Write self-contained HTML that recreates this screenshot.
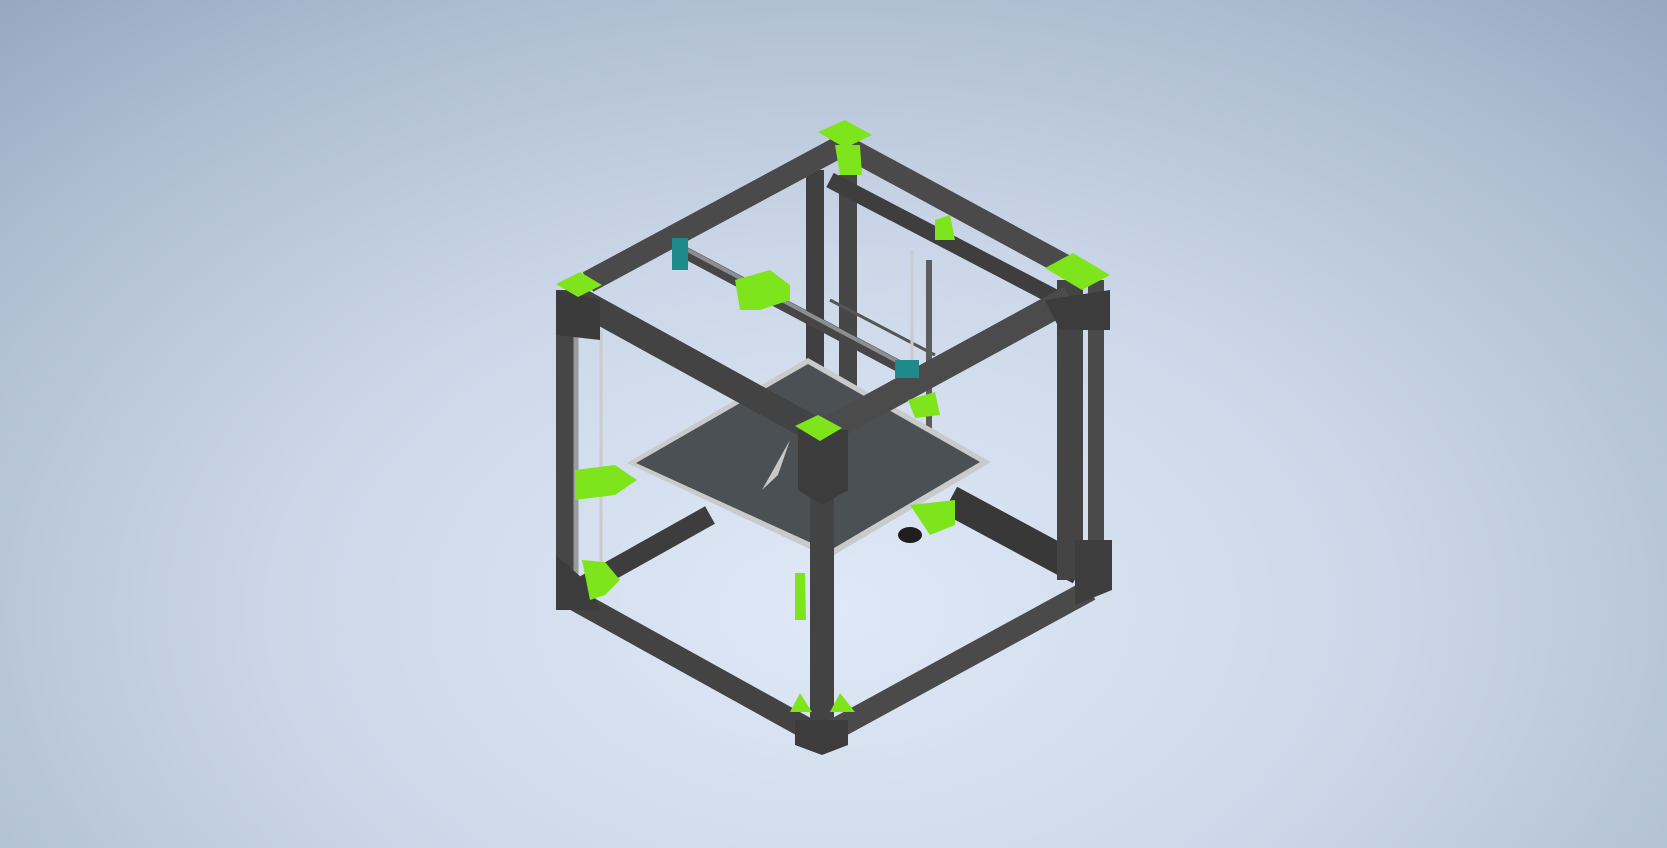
<!DOCTYPE html>
<html><head><meta charset="utf-8"><style>
html,body{margin:0;padding:0;width:1667px;height:848px;overflow:hidden}
body{background:radial-gradient(ellipse 75% 95% at 50% 72%,#dfe8f6 0%,#cbd7e8 45%,#aebcd1 80%,#98a8c0 100%)}
svg{position:absolute;left:0;top:0}
</style></head><body>
<svg width="1667" height="848" viewBox="0 0 1667 848">
<g stroke-linecap="butt" fill="none">
<line x1="815" y1="170" x2="815" y2="480" stroke="#3f3f40" stroke-width="18"/>
<line x1="848" y1="175" x2="848" y2="480" stroke="#464647" stroke-width="18"/>
<line x1="585" y1="585" x2="710" y2="515" stroke="#3d3d3e" stroke-width="20"/>
<line x1="1080" y1="570" x2="950" y2="500" stroke="#383839" stroke-width="30"/>
<line x1="588" y1="282" x2="843" y2="145" stroke="#4a4a4b" stroke-width="22"/>
<line x1="843" y1="145" x2="1070" y2="268" stroke="#4a4a4b" stroke-width="22"/>
<line x1="830" y1="180" x2="1060" y2="300" stroke="#3e3e3f" stroke-width="16"/>
<line x1="680" y1="250" x2="910" y2="372" stroke="#464647" stroke-width="12"/>
<line x1="680" y1="246" x2="910" y2="368" stroke="#8d8e8f" stroke-width="4"/>
<line x1="830" y1="300" x2="935" y2="355" stroke="#555" stroke-width="3"/>
<line x1="601" y1="330" x2="601" y2="570" stroke="#c9cbcd" stroke-width="3"/>
<line x1="912" y1="250" x2="912" y2="360" stroke="#c9cbcd" stroke-width="3"/>
<line x1="929" y1="260" x2="929" y2="470" stroke="#5c5c5d" stroke-width="6"/>
</g>
<polygon points="627,463 808,358 991,462 829,558" fill="#c9cacb"/>
<polygon points="636,463 808,364 980,462 829,551" fill="#4b5055"/>
<polygon points="790,440 778,475 762,490" fill="#c8c8c8"/>
<g stroke-linecap="butt" fill="none">
<line x1="567" y1="290" x2="567" y2="600" stroke="#464647" stroke-width="22"/>
<line x1="576" y1="320" x2="576" y2="590" stroke="#9a9b9c" stroke-width="5"/>
<line x1="1070" y1="280" x2="1070" y2="580" stroke="#444445" stroke-width="26"/>
<line x1="1096" y1="280" x2="1096" y2="590" stroke="#4a4a4b" stroke-width="16"/>
<line x1="822" y1="430" x2="822" y2="745" stroke="#434344" stroke-width="24"/>
<line x1="575" y1="298" x2="815" y2="430" stroke="#434344" stroke-width="26"/>
<line x1="828" y1="430" x2="1070" y2="298" stroke="#4b4b4c" stroke-width="26"/>
<line x1="575" y1="600" x2="815" y2="733" stroke="#434344" stroke-width="22"/>
<line x1="828" y1="733" x2="1090" y2="590" stroke="#4a4a4b" stroke-width="22"/>
</g>
<polygon points="556,290 600,300 600,340 556,335" fill="#3b3b3c"/>
<polygon points="798,430 848,430 848,490 822,505 798,490" fill="#3c3c3d"/>
<polygon points="1045,300 1110,290 1110,330 1060,330" fill="#3c3c3d"/>
<polygon points="556,555 590,585 600,610 556,610" fill="#3c3c3d"/>
<polygon points="795,720 848,720 848,745 822,755 795,745" fill="#3c3c3d"/>
<polygon points="1075,540 1112,540 1112,590 1075,605" fill="#3e3e3f"/>
<g fill="#7ee51c">
<polygon points="818,132 845,120 872,135 845,148"/>
<polygon points="835,145 860,145 862,175 840,175"/>
<polygon points="556,284 580,272 602,285 578,297"/>
<polygon points="1045,268 1073,253 1110,275 1082,290"/>
<polygon points="795,426 818,415 842,428 820,441"/>
<polygon points="575,470 615,465 637,480 615,495 575,500"/>
<polygon points="582,560 605,562 620,580 605,595 590,600"/>
<polygon points="790,712 800,693 812,712"/>
<polygon points="830,712 840,693 855,712"/>
<polygon points="910,505 955,500 955,525 930,535"/>
<polygon points="935,220 950,215 955,240 935,240"/>
<polygon points="795,573 805,573 806,620 795,620"/>
<polygon points="735,280 770,270 790,285 790,300 760,310 740,310"/>
<polygon points="908,400 935,392 940,415 915,418"/>
</g>
<g fill="#1f8a8c">
<rect x="672" y="238" width="16" height="32"/>
<rect x="895" y="360" width="24" height="18"/>
</g>
<ellipse cx="910" cy="535" rx="12" ry="8" fill="#1e1e1e"/>
</svg>
</body></html>
